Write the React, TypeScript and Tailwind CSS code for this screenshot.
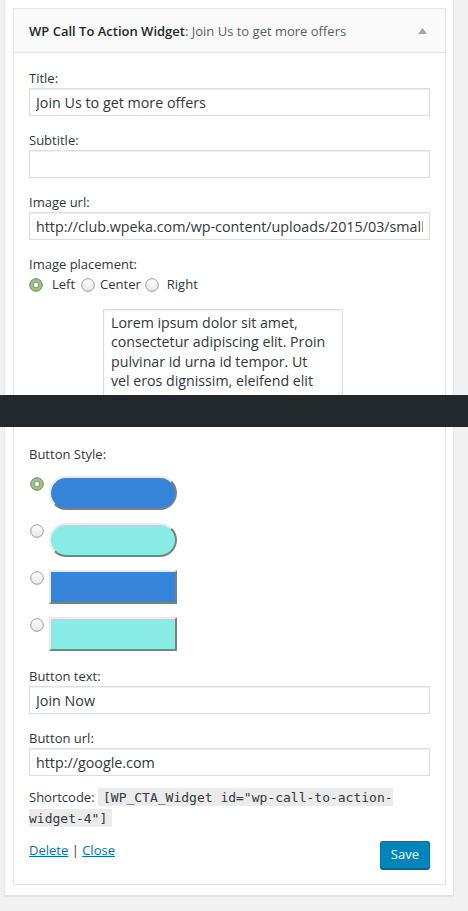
import React from 'react';

const labelCls = "block text-[13px] leading-[20px] text-[#32373c]";
const inputCls =
  "block w-full h-[28px] border border-[#ddd] bg-white px-[6px] text-[14.3px] text-[#32373c] shadow-[inset_0_1px_2px_rgba(0,0,0,0.07)] outline-none font-['Open_Sans',sans-serif]";

function Radio({ checked }: { checked?: boolean }) {
  if (checked) {
    return (
      <svg width="14" height="14" viewBox="0 0 14 14" className="shrink-0">
        <circle cx="7" cy="7" r="6.3" fill="#9cc582" stroke="#75846c" strokeWidth="1" />
        <circle cx="7" cy="7" r="2.8" fill="#fff" stroke="#6f7d66" strokeWidth="0.8" />
      </svg>
    );
  }
  return (
    <svg width="14" height="14" viewBox="0 0 14 14" className="shrink-0">
      <defs>
        <linearGradient id="rg" x1="0" y1="0" x2="0" y2="1">
          <stop offset="0" stopColor="#ffffff" />
          <stop offset="1" stopColor="#e6e6e6" />
        </linearGradient>
      </defs>
      <circle cx="7" cy="7" r="6.3" fill="url(#rg)" stroke="#9b9b9b" strokeWidth="1" />
    </svg>
  );
}

function Field({ label, value }: { label: string; value: string }) {
  return (
    <div className="mb-[14px]">
      <label className={labelCls}>{label}</label>
      <input className={inputCls} defaultValue={value} readOnly />
    </div>
  );
}

const styles = [
  { color: 'bg-[#3584d9]', round: true },
  { color: 'bg-[#88ebe4]', round: true },
  { color: 'bg-[#3584d9]', round: false },
  { color: 'bg-[#88ebe4]', round: false },
];

export default function App() {
  return (
    <div className="relative min-h-[911px] bg-[#f1f1f1] font-['Open_Sans',sans-serif] overflow-hidden">
      <div className="ml-[4px] w-[450px] border-x border-b border-[#e5e5e5] bg-white pt-[8px] pb-[10px] pl-[8px] shadow-[0_1px_1px_rgba(0,0,0,0.04)]">
        <div className="w-[433px] border border-[#e5e5e5] bg-white">
          <div className="flex h-[44px] items-center justify-between border-b border-[#e5e5e5] bg-[#fafafa] pl-[15px] pr-[18px]">
            <h3 className="text-[13px] leading-[20px] text-[#23282d]">
              <span className="font-semibold">WP Call To Action Widget</span>
              <span className="text-[#5a6066]">: Join Us to get more offers</span>
            </h3>
            <svg width="9" height="6" viewBox="0 0 9 6">
              <path d="M4.5 0 L9 6 L0 6 Z" fill="#a0a5aa" />
            </svg>
          </div>

          <div className="px-[15px] pt-[15px] pb-[15px]">
            <Field label="Title:" value="Join Us to get more offers" />
            <Field label="Subtitle:" value="" />
            <Field label="Image url:" value="http://club.wpeka.com/wp-content/uploads/2015/03/small-logo.png" />

            <label className={labelCls}>Image placement:</label>
            <div className="flex h-[22px] items-center text-[13px] text-[#32373c]">
              <Radio checked />
              <span className="ml-[9px]">Left</span>
              <span className="ml-[6px]"><Radio /></span>
              <span className="ml-[5px]">Center</span>
              <span className="ml-[4px]"><Radio /></span>
              <span className="ml-[8px]">Right</span>
            </div>

            <div className="mt-[13px] ml-[74px] h-[88px] w-[240px] border border-[#ddd] px-[7px] py-[3px] text-[14.2px] leading-[19.3px] text-[#32373c] shadow-[inset_0_1px_2px_rgba(0,0,0,0.07)] whitespace-pre-line">
              {"Lorem ipsum dolor sit amet,\nconsectetur adipiscing elit. Proin\npulvinar id urna id tempor. Ut\nvel eros dignissim, eleifend elit"}
            </div>

            <label className={`${labelCls} mt-[11px]`}>Description:</label>

            <label className={`${labelCls} mt-[16px]`}>Button Style:</label>
            <div className="mt-[12px] flex flex-col gap-[13px]">
              {styles.map((s, i) => (
                <div key={i} className="flex items-start">
                  <div className="mt-[1px] ml-[1px]">
                    <Radio checked={i === 0} />
                  </div>
                  <div
                    className={`ml-[5px] h-[34px] w-[128px] border-2 border-t-[#e9ecef] border-l-[#e9ecef] border-b-[#7f7f7f] border-r-[#7f7f7f] ${s.color} ${s.round ? 'rounded-[17px]' : ''}`}
                  />
                </div>
              ))}
            </div>

            <div className="mt-[15px]">
              <Field label="Button text:" value="Join Now" />
              <label className={labelCls}>Button url:</label>
              <input className={inputCls} defaultValue="http://google.com" readOnly />
            </div>

            <p className="mt-[11px] text-[13px] leading-[21px] text-[#32373c]">
              Shortcode:{' '}
              <code className="bg-[#ebebeb] px-[5px] pt-[2px] pb-[1px] font-['DejaVu_Sans_Mono',monospace] text-[13px]">
                [WP_CTA_Widget id="wp-call-to-action-widget-4"]
              </code>
            </p>

            <div className="mt-[11px] flex items-start justify-between">
              <div className="text-[13px] leading-[20px] text-[#32373c]">
                <a href="#" className="text-[#0073aa] underline">Delete</a>
                {' | '}
                <a href="#" className="text-[#0073aa] underline">Close</a>
              </div>
              <button className="mt-[1px] h-[28px] rounded-[3px] border border-[#0073aa] border-b-[#006799] bg-[#0085ba] px-[10px] text-[13px] text-white shadow-[0_1px_0_#006799]">
                Save
              </button>
            </div>
          </div>
        </div>
      </div>

      <div className="absolute left-0 top-[395px] h-[32px] w-full bg-[#23282d]" />
    </div>
  );
}
